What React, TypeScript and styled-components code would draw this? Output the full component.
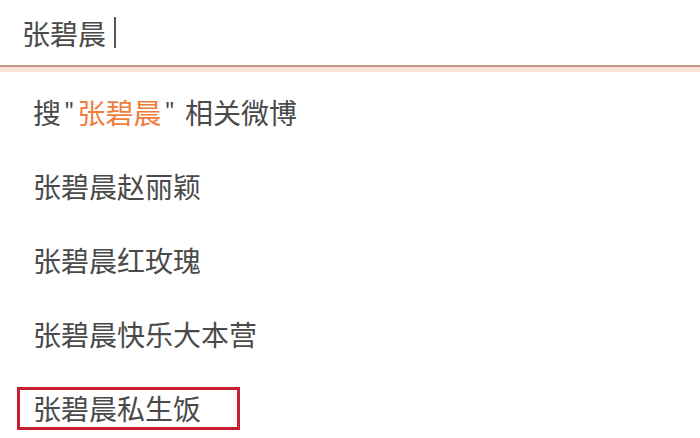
import React from 'react';
import styled, { createGlobalStyle, css } from 'styled-components';

const textColor = '#4a4a4a';
const highlightColor = '#f07d3c';
const boxColor = '#c52030';

const GlobalStyle = createGlobalStyle`
  html, body {
    margin: 0;
    padding: 0;
    background: #ffffff;
  }
  body {
    font-family: 'Noto Sans CJK SC', 'Noto Sans', sans-serif;
    color: ${textColor};
  }
`;

const Page = styled.div`
  width: 700px;
  height: 438px;
  overflow: hidden;
`;

const SearchBar = styled.div`
  height: 65px;
  display: flex;
  align-items: center;
  padding-left: 22px;
  border-bottom: 2px solid #c59886;
  box-shadow: 0 5px 0 #fbe4d8;
  font-size: 28px;
  line-height: 1;
`;

const Caret = styled.span`
  display: inline-block;
  width: 2px;
  height: 31px;
  margin-left: 8px;
  background: #555;
`;

const SuggestList = styled.ul`
  list-style: none;
  margin: 8px 0 0;
  padding: 0;
`;

const SuggestRow = styled.li`
  height: 74px;
  display: flex;
  align-items: center;
  padding-left: 33px;
  font-size: 28px;
  line-height: 1;
`;

const Label = styled.span<{ boxed?: boolean }>`
  display: inline-flex;
  align-items: center;
  ${(props) =>
    props.boxed &&
    css`
      height: 37px;
      margin-left: -16px;
      padding: 0 36px 0 13px;
      border: 3px solid ${boxColor};
    `}
`;

const Keyword = styled.span`
  color: ${highlightColor};
`;

const Quote = styled.span<{ closing?: boolean }>`
  margin: ${(props) => (props.closing ? '0 10px 0 3px' : '0 3px 0 3px')};
  font-size: 22px;
  align-self: flex-start;
`;

const suggestions = ['张碧晨赵丽颖', '张碧晨红玫瑰', '张碧晨快乐大本营', '张碧晨私生饭'];

const App = () => {
  return (
    <>
      <GlobalStyle />
      <Page>
        <SearchBar>
          张碧晨
          <Caret />
        </SearchBar>
        <SuggestList>
          <SuggestRow>
            <Label>
              搜<Quote>"</Quote>
              <Keyword>张碧晨</Keyword>
              <Quote closing>"</Quote>相关微博
            </Label>
          </SuggestRow>
          {suggestions.map((text, i) => (
            <SuggestRow key={text}>
              <Label boxed={i === suggestions.length - 1}>{text}</Label>
            </SuggestRow>
          ))}
        </SuggestList>
      </Page>
    </>
  );
};

export default App;
